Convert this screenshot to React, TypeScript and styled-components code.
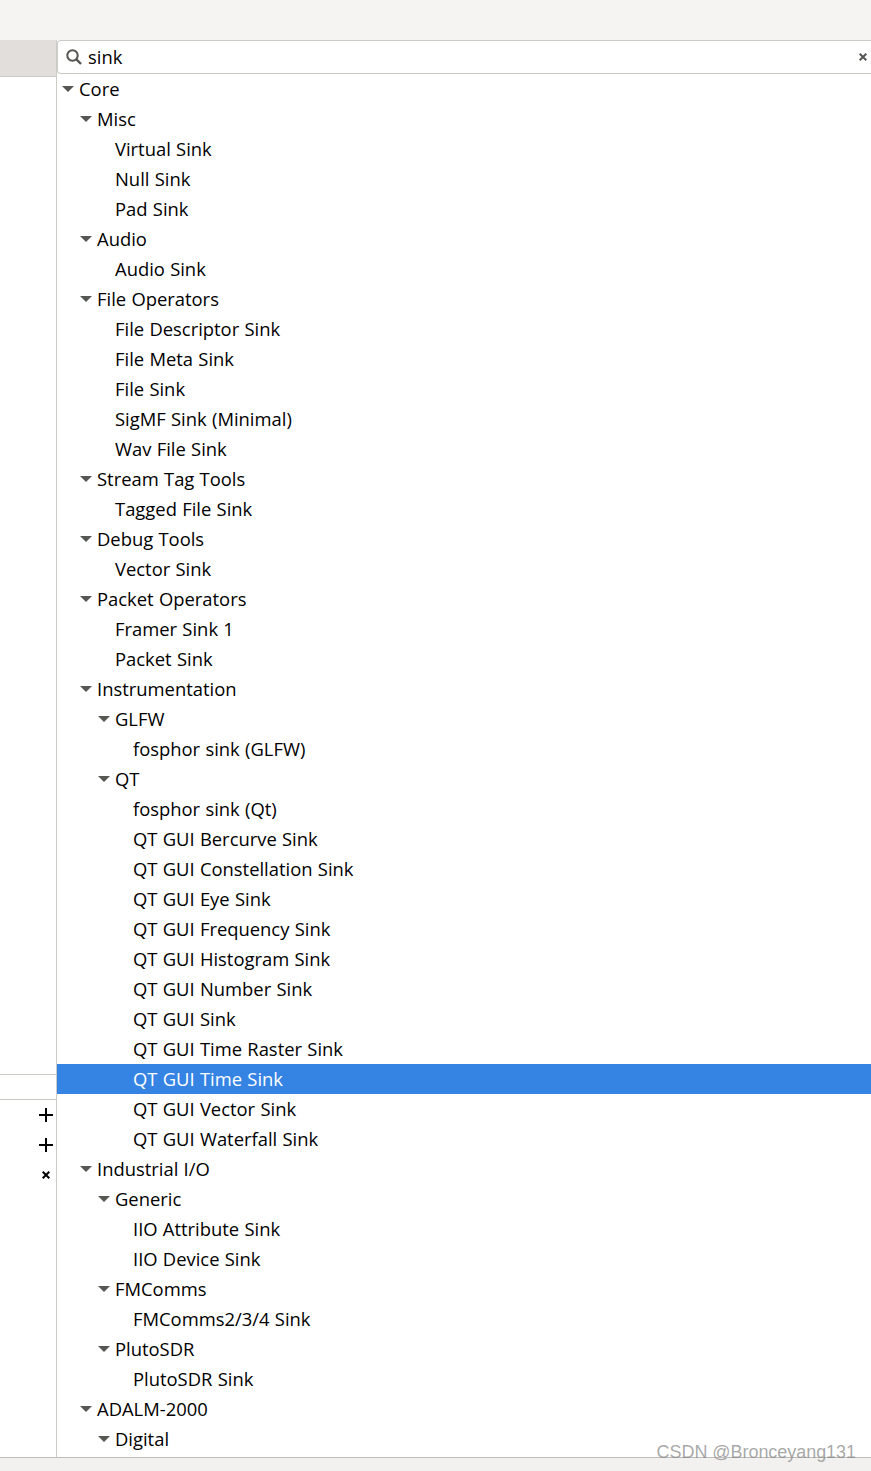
import React from "react";
import styled, { createGlobalStyle } from "styled-components";

const GlobalStyle = createGlobalStyle`
    html, body {
        margin: 0;
        padding: 0;
        background: #ffffff;
    }
`;

const Page = styled.div`
    position: relative;
    width: 871px;
    height: 1471px;
    overflow: hidden;
    display: flex;
    flex-direction: column;
    background: #ffffff;
    font-family: "Open Sans", "Noto Sans", sans-serif;
    color: #000000;
`;
const TopBar = styled.div`
    height: 40px;
    flex: none;
    background: #f5f4f2;
`;
const Body = styled.div`
    flex: 1;
    min-height: 0;
    display: flex;
`;
const BottomBar = styled.div`
    height: 13px;
    flex: none;
    background: #f2f1ef;
    border-top: 1px solid #bdbcb9;
`;

const Side = styled.aside`
    width: 56px;
    flex: none;
    display: flex;
    flex-direction: column;
    border-right: 1px solid #cdcbc6;
`;
const SideHeader = styled.div`
    height: 36px;
    flex: none;
    background: #e1dedb;
    border-bottom: 1px solid #cdcbc6;
`;
const SideBlank = styled.div`
    flex: none;
    height: 997px;
    border-bottom: 1px solid #cdcbc6;
`;
const SideRow = styled.div`
    height: 24px;
    flex: none;
    border-bottom: 1px solid #cdcbc6;
`;
const SideButton = styled.div`
    height: 30px;
    width: 14px;
    flex: none;
    margin-left: 39px;
    display: flex;
    align-items: center;
    justify-content: center;
`;

const Main = styled.main`
    flex: 1;
    min-width: 0;
    display: flex;
    flex-direction: column;
`;
const SearchBox = styled.div`
    height: 32px;
    flex: none;
    display: flex;
    align-items: center;
    gap: 6px;
    padding: 0 4px 0 8px;
    background: #ffffff;
    border: 1px solid #cdcbc6;
    border-right: none;
    border-radius: 4px 0 0 4px;
`;
const SearchText = styled.span`
    flex: 1;
    font-size: 18.4px;
    line-height: 32px;
`;
const Tree = styled.div`
    flex: 1;
    min-height: 0;
    overflow: hidden;
`;
const Row = styled.div<{ $depth: number; $selected?: boolean }>`
    box-sizing: border-box;
    height: 30px;
    display: flex;
    align-items: center;
    padding-left: ${(props) => 5 + props.$depth * 18}px;
    padding-bottom: 2px;
    font-size: 18.4px;
    word-spacing: 0.5px;
    white-space: nowrap;
    background: ${(props) => (props.$selected ? "#3584e4" : "transparent")};
    color: ${(props) => (props.$selected ? "#ffffff" : "#000000")};
`;
const Arrow = styled.span<{ $hidden?: boolean }>`
    flex: none;
    width: 0;
    height: 0;
    margin-top: 2px;
    margin-right: 5px;
    border-style: solid;
    border-width: 6px 6px 0 6px;
    border-color: ${(props) =>
        props.$hidden ? "transparent" : "#555753"} transparent transparent
        transparent;
`;
const Watermark = styled.span`
    position: absolute;
    right: 15px;
    bottom: 8px;
    font-family: "Liberation Sans", sans-serif;
    font-size: 18px;
    color: rgba(130, 130, 130, 0.7);
    letter-spacing: -0.05px;
`;

type Item = [number, string, boolean?];

const items: Item[] = [
    [0, "Core", true],
    [1, "Misc", true],
    [2, "Virtual Sink"],
    [2, "Null Sink"],
    [2, "Pad Sink"],
    [1, "Audio", true],
    [2, "Audio Sink"],
    [1, "File Operators", true],
    [2, "File Descriptor Sink"],
    [2, "File Meta Sink"],
    [2, "File Sink"],
    [2, "SigMF Sink (Minimal)"],
    [2, "Wav File Sink"],
    [1, "Stream Tag Tools", true],
    [2, "Tagged File Sink"],
    [1, "Debug Tools", true],
    [2, "Vector Sink"],
    [1, "Packet Operators", true],
    [2, "Framer Sink 1"],
    [2, "Packet Sink"],
    [1, "Instrumentation", true],
    [2, "GLFW", true],
    [3, "fosphor sink (GLFW)"],
    [2, "QT", true],
    [3, "fosphor sink (Qt)"],
    [3, "QT GUI Bercurve Sink"],
    [3, "QT GUI Constellation Sink"],
    [3, "QT GUI Eye Sink"],
    [3, "QT GUI Frequency Sink"],
    [3, "QT GUI Histogram Sink"],
    [3, "QT GUI Number Sink"],
    [3, "QT GUI Sink"],
    [3, "QT GUI Time Raster Sink"],
    [3, "QT GUI Time Sink"],
    [3, "QT GUI Vector Sink"],
    [3, "QT GUI Waterfall Sink"],
    [1, "Industrial I/O", true],
    [2, "Generic", true],
    [3, "IIO Attribute Sink"],
    [3, "IIO Device Sink"],
    [2, "FMComms", true],
    [3, "FMComms2/3/4 Sink"],
    [2, "PlutoSDR", true],
    [3, "PlutoSDR Sink"],
    [1, "ADALM-2000", true],
    [2, "Digital", true],
];

const SearchIcon = () => (
    <svg width="16" height="16" viewBox="0 0 16 16" fill="none">
        <circle cx="6.5" cy="6.5" r="5.2" stroke="#555753" strokeWidth="2" />
        <path d="M10.2 10.2L15 15" stroke="#555753" strokeWidth="2.4" />
    </svg>
);

const CloseIcon = ({ color }: { color: string }) => (
    <svg width="8" height="8" viewBox="0 0 8 8" fill="none">
        <path d="M0.7 0.7L7.3 7.3M7.3 0.7L0.7 7.3" stroke={color} strokeWidth="2" />
    </svg>
);

const PlusIcon = () => (
    <svg width="14" height="14" viewBox="0 0 14 14" fill="none">
        <path d="M7 0V14M0 7H14" stroke="#000000" strokeWidth="2" />
    </svg>
);

const App = () => {
    return (
        <Page>
            <GlobalStyle />
            <TopBar />
            <Body>
                <Side>
                    <SideHeader />
                    <SideBlank />
                    <SideRow />
                    <SideButton>
                        <PlusIcon />
                    </SideButton>
                    <SideButton>
                        <PlusIcon />
                    </SideButton>
                    <SideButton>
                        <CloseIcon color="#000000" />
                    </SideButton>
                </Side>
                <Main>
                    <SearchBox>
                        <SearchIcon />
                        <SearchText>sink</SearchText>
                        <CloseIcon color="#555753" />
                    </SearchBox>
                    <Tree>
                        {items.map(([depth, label, open]) => (
                            <Row
                                key={label}
                                $depth={depth}
                                $selected={label === "QT GUI Time Sink"}
                            >
                                <Arrow $hidden={!open} />
                                {label}
                            </Row>
                        ))}
                    </Tree>
                </Main>
            </Body>
            <BottomBar />
            <Watermark>CSDN @Bronceyang131</Watermark>
        </Page>
    );
};

export default App;
